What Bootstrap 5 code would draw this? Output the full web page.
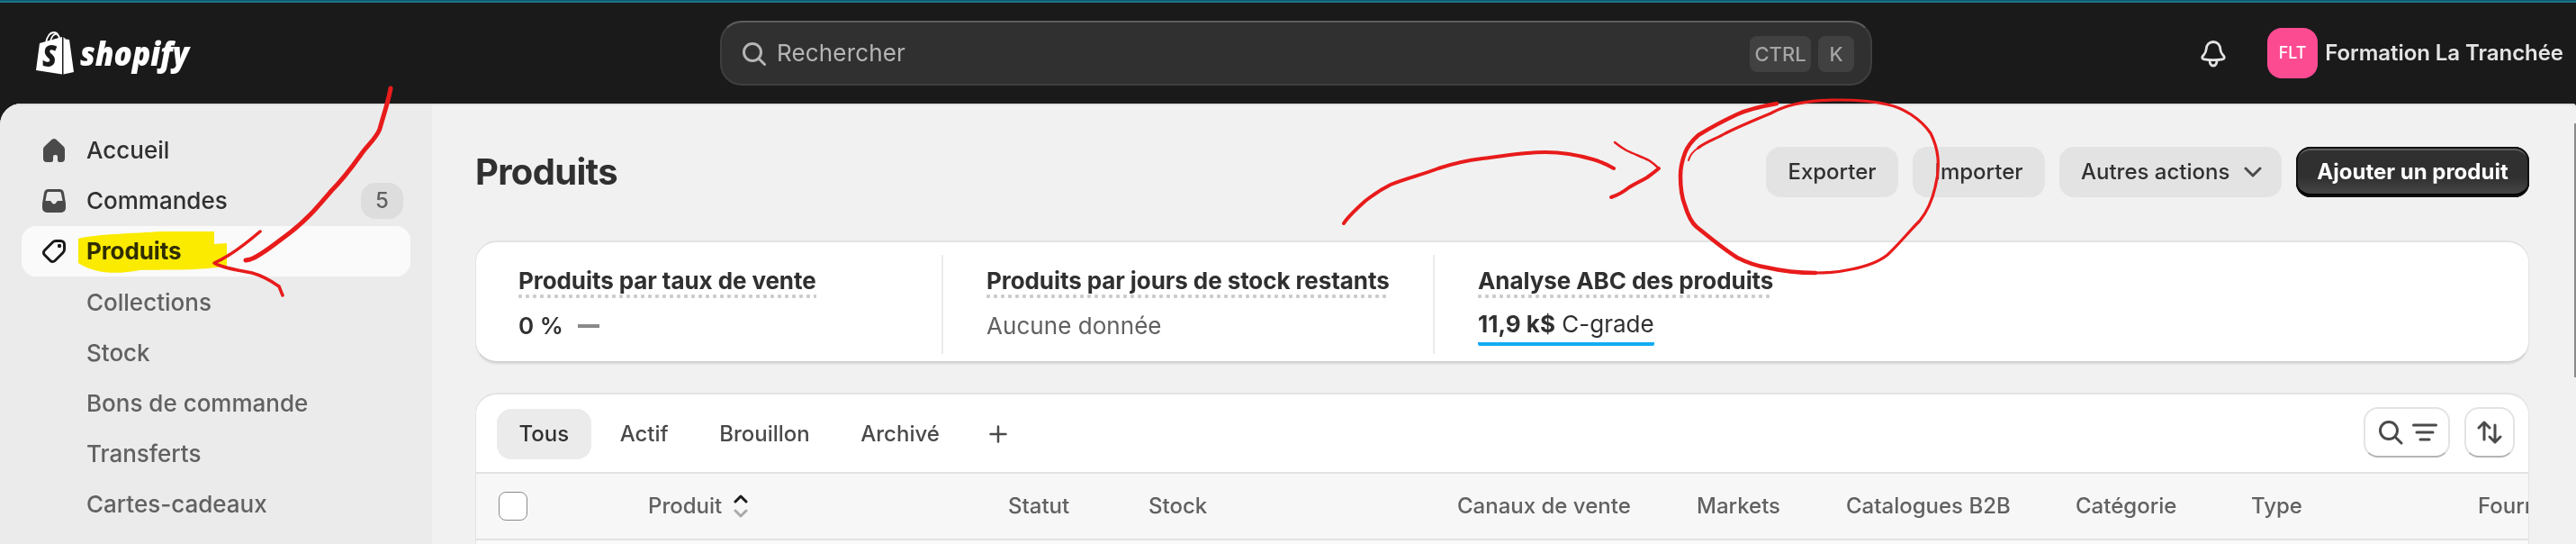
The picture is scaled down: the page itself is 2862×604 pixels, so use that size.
<!DOCTYPE html>
<html lang="fr">
<head>
    <meta charset="UTF-8">
    <title>Produits</title>
    <link href="https://cdn.jsdelivr.net/npm/bootstrap@5.3.3/dist/css/bootstrap.min.css" rel="stylesheet">
    <style>
        body { font-family: Inter, "Liberation Sans", sans-serif; font-size: 26px; line-height: 40px; color: #303030; background: #1a1a1a; height: 604px; overflow: hidden; }
        svg { display: block; flex: none; }

        /* Barre supérieure */
        .topbar { height: 115px; background: linear-gradient(#0a5a70 1px, #1d7488 1px, #1d7488 3px, #1a1a1a 3px); padding: 3px 14px 0 40px; }
        .brand-zone { width: 760px; }
        .brand-zone svg { overflow: visible; }
        .brand-name { font-family: "Open Sans", sans-serif; font-weight: 800; font-style: italic; }
        .search-box { width: 1280px; height: 72px; border-radius: 24px; background: #303030; border: 2px solid #3f3f3f; border-top-color: #5c5c5c; padding: 0 18px 0 22px; color: #b5b5b5; }
        .search-text { margin-left: 11px; letter-spacing: .15px; }
        .key { height: 40px; border-radius: 8px; background: #414141; font-size: 22px; font-weight: 500; color: #a5a5a5; margin-top: 2px; }
        .key-ctrl { width: 68px; }
        .key-k { width: 40px; }
        .bell { margin-right: 44px; }
        .avatar { width: 56px; height: 56px; border-radius: 16px; background: #fd4b92; color: #fff; font-size: 18px; font-weight: 500; }
        .shop-name { font-size: 24px; font-weight: 600; color: #e3e3e3; white-space: nowrap; letter-spacing: -.05px; }

        /* Structure */
        .frame { height: 489px; border-radius: 24px 4px 0 0; background: #f1f1f1; overflow: hidden; box-shadow: inset 0 2px #e0e0e0; }
        .sidebar { width: 480px; background: #ebebeb; padding: 22px 24px 0; border-top: 2px solid #dedede; }
        .side-link { height: 56px; padding: 0 8px 1px 22px; border-radius: 16px; font-weight: 550; color: #303030; text-decoration: none; }
        .side-link svg { margin-right: 22px; }
        .side-link.current { background: #fafafa; font-weight: 650; letter-spacing: -.1px; }
        .side-link.sub { padding: 1px 0 0 72px; font-weight: 450; color: #616161; }
        .count { width: 47px; height: 40px; border-radius: 16px; background: #dddddd; color: #616161; font-size: 24px; font-weight: 450; }

        .page { width: 2382px; padding: 48px 52px 0 48px; }
        .page-title { font-size: 40px; line-height: 56px; font-weight: 700; letter-spacing: -.7px; }
        .action { height: 56px; border-radius: 16px; background: #e3e3e3; font-size: 24px; font-weight: 550; color: #303030; }
        .action-s { width: 147px; }
        .action-m { width: 247px; padding: 0 22px 0 24px; }
        .action-main { width: 259px; background: linear-gradient(#303030 60%, #4a4a4a); color: #fff; font-weight: 650; box-shadow: inset 0 0 0 2px #111, inset 0 4px #5e5e5e, inset 0 -4px #000; }

        /* Cartes */
        .panel { background: #fff; border-radius: 24px; border: 2px solid #e3e3e3; border-width: 2px 1px; }
        .stats { height: 136px; margin-top: 48px; border-bottom-color: #d2d2d2; box-shadow: 0 2px #e4e4e4; padding: 14px 0 10px 47px; }
        .stat { height: 110px; padding-top: 6px; }
        .stat + .stat { border-left: 2px solid #ebebeb; padding-left: 48px; }
        .stat-a { width: 470px; }
        .stat-b { width: 546px; }
        .stat-title { font-weight: 650; line-height: 45px; height: 46px; white-space: nowrap; width: max-content; letter-spacing: -.08px; }
        .dots { height: 4px; margin-top: -7px; background: radial-gradient(circle at 2px 2px, #ccc 2px, transparent 2.4px) 0 0 / 8px 4px; }
        .stat-value { line-height: 41px; margin-top: 6px; font-weight: 600; }
        .stat-value.empty { font-weight: 400; color: #616161; letter-spacing: .05px; }
        .stat-value.grade { font-weight: 400; border-bottom: 4px solid #12acf0; border-radius: 2px; width: max-content; margin-top: 5px; padding-bottom: 1px; line-height: 39px; }
        .grade b { font-weight: 650; }
        .products { height: 240px; margin-top: 33px; overflow: hidden; border-bottom: 0; border-radius: 24px 24px 0 0; }
        .tabs { height: 86px; padding: 0 15px 0 23px; }
        .tab { height: 56px; padding: 0 25px 0 24.5px; margin: 2px 7px 0 0; border-radius: 16px; font-size: 24px; font-weight: 550; color: #4a4a4a; }
        .tab.current { background: #ebebeb; color: #303030; }
        .plus { margin: 2px 0 0 23px; }
        .tool { height: 56px; border-radius: 16px; background: #fff; border: 2px solid #e3e3e3; border-bottom-color: #b5b5b5; margin-bottom: 2px; }
        .tool-a { width: 96px; padding-left: 1px; }
        .tool-b { width: 56px; }
        .thead-row { display: grid; grid-template-columns: 166px 400px 156px 343px 266px 166px 255px 195px 252px 60px; padding-left: 25px; height: 76px; align-items: center; background: #f7f7f7; border-top: 2px solid #e3e3e3; border-bottom: 2px solid #e3e3e3; font-size: 24px; font-weight: 550; color: #616161; white-space: nowrap; }
        .tick { width: 32px; height: 32px; border: 1.5px solid #8a8a8a; border-radius: 8px; background: #fff; }
        .next-row { height: 80px; background: #fafafa; }

        /* Éléments superposés */
        .overlay { position: absolute; left: 0; top: 0; pointer-events: none; }
        .ink { mix-blend-mode: multiply; }
        .scroll-thumb { position: absolute; right: 0; top: 137px; width: 2px; height: 282px; background: #8a8a8a; }
    </style>
</head>
<body>

    <!-- Barre supérieure -->
    <header class="topbar d-flex align-items-center">
        <div class="brand-zone">
            <svg width="180" height="60" viewBox="40 29 180 60">
                <path fill="none" stroke="#fff" stroke-width="1.800" d="M51 48C52 40 56 36 60 36c4 0 6 4 6 9M56 46c1-5 4-9 7-8 2 1 3 3 3 5"/>
                <path fill="#fff" d="M44 48L69 41V82.500L40 78ZM70.500 41l2.500 2.500 4 .5 5 36-11.500 2.500Z"/>
                <text x="47" y="74" font-size="33" fill="#1a1a1a" class="brand-name" textLength="16" lengthAdjust="spacingAndGlyphs">S</text>
                <text x="89" y="72.500" font-size="37" fill="#fff" class="brand-name" textLength="121" lengthAdjust="spacingAndGlyphs">shopify</text>
            </svg>
        </div>
        <div class="search-box d-flex align-items-center">
            <svg width="28" height="28" viewBox="0 0 28 28" fill="none" stroke="#b5b5b5" stroke-width="3" stroke-linecap="round"><circle cx="12" cy="13" r="9.500"/><path d="M19 20l6.500 6.500"/></svg>
            <span class="search-text flex-grow-1">Rechercher</span>
            <span class="key key-ctrl d-flex align-items-center justify-content-center me-2">CTRL</span>
            <span class="key key-k d-flex align-items-center justify-content-center">K</span>
        </div>
        <div class="d-flex align-items-center ms-auto">
            <svg class="bell" width="32" height="32" viewBox="0 0 32 32" fill="none" stroke="#e3e3e3" stroke-width="2.800" stroke-linejoin="round"><path d="M16 3.500c-4.500 0-7.500 3.500-7.800 8-.2 4-1.500 5-3.700 7.500-1.500 1.800-.8 3.500 1.500 3.800 6 1 14 1 20 0 2.300-.3 3-2 1.500-3.800C25.300 16.500 24 15.500 23.800 11.500c-.3-4.500-3.300-8-7.800-8ZM12 23.500c0 4 1.500 6.500 4 6.500s4-2.500 4-6.500"/></svg>
            <span class="avatar d-flex align-items-center justify-content-center">FLT</span>
            <span class="shop-name ms-2">Formation La Tranchée</span>
        </div>
    </header>

    <div class="frame d-flex">
        <!-- Menu latéral -->
        <nav class="sidebar flex-shrink-0">
            <a class="side-link d-flex align-items-center" href="#">
                <svg width="28" height="28" viewBox="0 0 28 28"><path fill="#4a4a4a" d="M11.500 2a4 4 0 0 1 5 0l8 7.500A5 5 0 0 1 26 13v10a4 4 0 0 1-4 4h-2a2 2 0 0 1-2-2v-4a2 2 0 0 0-2-2h-1a2 2 0 0 0-2 2v4a2 2 0 0 1-2 2H6a4 4 0 0 1-4-4V13a5 5 0 0 1 1.500-3.500Z"/></svg>
                Accueil
            </a>
            <a class="side-link d-flex align-items-center" href="#">
                <svg width="28" height="28" viewBox="0 0 28 28"><path fill="#4a4a4a" fill-rule="evenodd" d="M8 1h12a5 5 0 0 1 5 4l2 12v5a5 5 0 0 1-5 5H6a5 5 0 0 1-5-5v-5L3 5a5 5 0 0 1 5-4ZM8 4a2 2 0 0 0-2 2L4.500 14H9c1 0 2 .5 2.300 1.500a2.800 2.800 0 0 0 5.400 0C17 14.500 18 14 19 14h4.500L22 6a2 2 0 0 0-2-2Z"/></svg>
                <span class="flex-grow-1">Commandes</span>
                <span class="count d-flex align-items-center justify-content-center">5</span>
            </a>
            <a class="side-link current d-flex align-items-center" href="#">
                <svg width="28" height="28" viewBox="0 0 28 28"><path fill="none" stroke="#1a1a1a" stroke-width="3" stroke-linejoin="round" d="M16 2.500h5.500a4 4 0 0 1 4 4V12c0 1.500-.5 2.500-1.500 3.500l-9 9a3.500 3.500 0 0 1-5 0L3.500 18a3.500 3.500 0 0 1 0-5l9-9c1-1 2-1.500 3.500-1.500Z"/><circle cx="20" cy="8" r="2.200" fill="#1a1a1a"/></svg>
                Produits
            </a>
            <a class="side-link sub d-flex align-items-center" href="#">Collections</a>
            <a class="side-link sub d-flex align-items-center" href="#">Stock</a>
            <a class="side-link sub d-flex align-items-center" href="#">Bons de commande</a>
            <a class="side-link sub d-flex align-items-center" href="#">Transferts</a>
            <a class="side-link sub d-flex align-items-center" href="#">Cartes-cadeaux</a>
        </nav>

        <!-- Contenu -->
        <main class="page flex-shrink-0">
            <div class="d-flex align-items-center gap-3">
                <h1 class="page-title mb-0 me-auto">Produits</h1>
                <span class="action action-s d-flex align-items-center justify-content-center">Exporter</span>
                <span class="action action-s d-flex align-items-center justify-content-center">Importer</span>
                <span class="action action-m d-flex align-items-center justify-content-between">Autres actions
                    <svg width="20" height="12" viewBox="0 0 20 12" fill="none" stroke="#4a4a4a" stroke-width="3" stroke-linecap="round" stroke-linejoin="round"><path d="M2 2l8 8 8-8"/></svg>
                </span>
                <span class="action action-main d-flex align-items-center justify-content-center">Ajouter un produit</span>
            </div>

            <div class="panel stats d-flex">
                <div class="stat stat-a">
                    <div class="stat-title">Produits par taux de vente<div class="dots"></div></div>
                    <div class="stat-value d-flex align-items-center">0 %<svg class="ms-3" width="24" height="4"><rect width="24" height="4" fill="#8a8a8a"/></svg></div>
                </div>
                <div class="stat stat-b">
                    <div class="stat-title">Produits par jours de stock restants<div class="dots"></div></div>
                    <div class="stat-value empty">Aucune donnée</div>
                </div>
                <div class="stat">
                    <div class="stat-title">Analyse ABC des produits<div class="dots"></div></div>
                    <div class="stat-value grade"><b>11,9 k$</b> C-grade</div>
                </div>
            </div>

            <div class="panel products">
                <div class="tabs d-flex align-items-center">
                    <span class="tab current d-flex align-items-center">Tous</span>
                    <span class="tab d-flex align-items-center">Actif</span>
                    <span class="tab d-flex align-items-center">Brouillon</span>
                    <span class="tab d-flex align-items-center">Archivé</span>
                    <svg class="plus" width="20" height="20" viewBox="0 0 20 20" stroke="#4a4a4a" stroke-width="2.500" stroke-linecap="round"><path d="M10 1.500v17M1.500 10h17"/></svg>
                    <span class="tool tool-a d-flex align-items-center justify-content-center ms-auto me-3">
                        <svg width="28" height="28" viewBox="0 0 28 28" fill="none" stroke="#4a4a4a" stroke-width="3" stroke-linecap="round"><circle cx="12" cy="12" r="9.500"/><path d="M19 19l7 7"/></svg>
                        <svg class="ms-2" width="30" height="22" viewBox="0 0 30 22" stroke="#4a4a4a" stroke-width="3" stroke-linecap="round"><path d="M3.500 3h25M7 11h18M11 19h10"/></svg>
                    </span>
                    <span class="tool tool-b d-flex align-items-center justify-content-center">
                        <svg width="28" height="28" viewBox="0 0 28 28" fill="none" stroke="#4a4a4a" stroke-width="3" stroke-linecap="round" stroke-linejoin="round"><path d="M8 22V3M2 9l6-6 6 6M20 6v19M14 19l6 6 6-6"/></svg>
                    </span>
                </div>
                <div class="thead-row">
                    <span class="tick"></span>
                    <span class="d-flex align-items-center">Produit
                        <svg class="ms-2" width="26" height="26" viewBox="0 0 26 26" fill="none" stroke-width="3" stroke-linecap="round" stroke-linejoin="round"><path stroke="#1a1a1a" d="M7 8l6-6 6 6"/><path stroke="#aaa" d="M7 18l6 6 6-6"/></svg>
                    </span>
                    <span>Statut</span>
                    <span>Stock</span>
                    <span>Canaux de vente</span>
                    <span>Markets</span>
                    <span>Catalogues B2B</span>
                    <span>Catégorie</span>
                    <span>Type</span>
                    <span>Fournisseur</span>
                </div>
                <div class="next-row"></div>
            </div>
        </main>
    </div>

    <div class="scroll-thumb"></div>

    <!-- Surligneur -->
    <svg class="overlay ink" width="2862" height="604"><path fill="#fff000" d="M87 265C105 260 150 259 180 257H238V271L252 270V295C225 301 180 299 155 300 130 305 105 304 87 292Z"/></svg>

    <!-- Annotations au stylo -->
    <svg class="overlay" width="2862" height="604" fill="none" stroke="#e81b1b" stroke-width="4" stroke-linecap="round" stroke-linejoin="round">
        <path stroke-width="5" d="M434 98C431 115 425 131 422 143 418 154 408 161 400 173 390 187 378 202 368 212 350 233 340 245 320 260 305 271 290 284 278 288L273 289"/>
        <path stroke-width="3.500" d="M289 257C275 269 257 284 238 292 246 297 263 300 280 303 291 306 303 313 310 318L314 328"/>
        <path d="M1493 248C1498 240 1508 231 1517 223C1526 216 1535 210 1545 205C1562 198 1580 194 1598 187C1613 182 1630 178 1647 176C1670 173 1695 169 1717 169C1735 169 1753 172 1770 177Q1783 181 1793 187"/>
        <path stroke-width="2.500" d="M1794 158Q1800 163 1807 167C1815 171 1824 174 1832 178Q1838 182 1843 187"/>
        <path d="M1843 187Q1837 192 1830 197C1823 201 1816 204 1810 208Q1800 216 1790 219"/>
        <path stroke-width="4.500" d="M1974 115C1957 118 1943 121 1930 127C1915 134 1900 142 1887 150C1880 156 1875 162 1872 170C1869 178 1867 186 1867 195C1867 207 1868 218 1872 228C1875 238 1879 247 1885 252C1900 264 1914 276 1930 286C1940 291 1950 295 1963 297C1980 301 1998 303 2017 303"/>
        <path stroke-width="3.200" d="M2017 303C2030 303 2044 302 2057 299C2072 296 2087 291 2097 283C2109 272 2121 257 2133 245C2141 235 2147 221 2150 208C2153 197 2154 186 2153 175C2152 165 2149 156 2145 148C2139 139 2132 133 2123 127C2115 122 2107 118 2097 116C2080 112 2061 111 2043 111C2026 111 2009 112 1993 116Q1980 119 1967 126C1950 133 1933 140 1917 148C1907 154 1896 157 1887 164"/>
        <path stroke-width="2" d="M1887 164Q1878 170 1876 178"/>
    </svg>

    <script src="https://cdn.jsdelivr.net/npm/bootstrap@5.3.3/dist/js/bootstrap.bundle.min.js"></script>
</body>
</html>
